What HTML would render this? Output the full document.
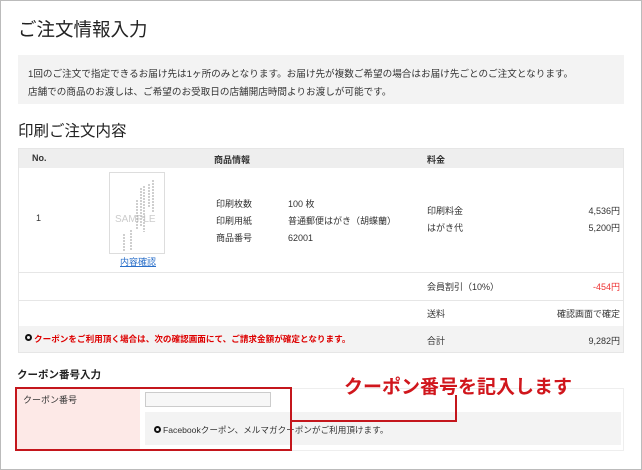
<!DOCTYPE html>
<html><head><meta charset="utf-8"><style>
*{margin:0;padding:0;box-sizing:border-box}
body{width:642px;height:470px;background:#fff;font-family:"Liberation Sans","Noto Sans CJK JP",sans-serif;color:#333;position:relative;overflow:hidden}
.a{position:absolute;white-space:nowrap}
.s{font-size:9px}
</style></head><body>
<div class="a" style="left:0;top:0;width:642px;height:470px;border:1px solid #bbb"></div>
<div class="a" style="left:18px;top:16px;font-size:18.5px;color:#222">ご注文情報入力</div>
<div class="a" style="left:18px;top:55px;width:606px;height:49px;background:#f3f3f3"></div>
<div class="a" style="left:28px;top:66px;font-size:9.6px;line-height:18px;color:#333">1回のご注文で指定できるお届け先は1ヶ所のみとなります。お届け先が複数ご希望の場合はお届け先ごとのご注文となります。<br>店舗での商品のお渡しは、ご希望のお受取日の店舗開店時間よりお渡しが可能です。</div>
<div class="a" style="left:18px;top:119px;font-size:15.5px;color:#222">印刷ご注文内容</div>

<div class="a" style="left:18px;top:148px;width:606px;height:205px;border:1px solid #e6e6e6"></div>
<div class="a" style="left:19px;top:149px;width:604px;height:19px;background:#eee"></div>
<div class="a s" style="left:32px;top:153px;font-weight:bold">No.</div>
<div class="a s" style="left:214px;top:153px;font-weight:bold">商品情報</div>
<div class="a s" style="left:427px;top:153px;font-weight:bold">料金</div>

<div class="a s" style="left:36px;top:263px;top:263px"></div>
<div class="a s" style="left:37px;top:263px;top:263px"></div>
<div class="a s" style="left:37px;top:263px"></div>
<div class="a s" style="left:36px;top:263px"></div>
<div class="a s" style="left:37px;top:262px;top:262px"></div>
<div class="a s" style="left:36px;top:262px"></div>
<div class="a s" style="left:36px;top:213px">1</div>

<div class="a" style="left:109px;top:172px;width:56px;height:82px;border:1px solid #ddd;background:#fff"></div>
<svg class="a" style="left:109px;top:172px" width="56" height="82"><g stroke="#888" stroke-width="0.8" stroke-dasharray="2 1">
<line x1="44" y1="8" x2="44" y2="40"/><line x1="40" y1="12" x2="40" y2="36"/><line x1="35" y1="14" x2="35" y2="60"/><line x1="32" y1="16" x2="32" y2="55"/><line x1="28" y1="28" x2="28" y2="58"/><line x1="22" y1="58" x2="22" y2="78"/><line x1="15" y1="62" x2="15" y2="80"/></g>
<text x="6" y="50" font-size="10" fill="#ccc" font-family="Liberation Sans">SAMPLE</text></svg>
<div class="a s" style="left:120px;top:255px;color:#2a6fc9;text-decoration:underline">内容確認</div>

<div class="a s" style="left:216px;top:196px;line-height:17px">印刷枚数<br>印刷用紙<br>商品番号</div>
<div class="a s" style="left:288px;top:196px;line-height:17px">100 枚<br>普通郵便はがき（胡蝶蘭）<br>62001</div>
<div class="a s" style="left:427px;top:203px;line-height:17px">印刷料金<br>はがき代</div>
<div class="a s" style="left:560px;top:203px;width:60px;text-align:right;line-height:17px">4,536円<br>5,200円</div>

<div class="a" style="left:19px;top:272px;width:604px;height:1px;background:#e6e6e6"></div>
<div class="a s" style="left:427px;top:280px">会員割引（10%）</div>
<div class="a s" style="left:560px;top:280px;width:60px;text-align:right;color:#e33">-454円</div>
<div class="a" style="left:19px;top:300px;width:604px;height:1px;background:#e6e6e6"></div>
<div class="a s" style="left:427px;top:307px">送料</div>
<div class="a s" style="left:520px;top:307px;width:100px;text-align:right">確認画面で確定</div>
<div class="a" style="left:19px;top:326px;width:604px;height:26px;background:#f3f3f3"></div>
<div class="a" style="left:25px;top:334px;width:7px;height:7px;border-radius:50%;border:2px solid #111"></div>
<div class="a s" style="left:34px;top:333px;color:#d00;font-weight:bold;font-size:8.6px">クーポンをご利用頂く場合は、次の確認画面にて、ご請求金額が確定となります。</div>
<div class="a s" style="left:427px;top:334px">合計</div>
<div class="a s" style="left:560px;top:334px;width:60px;text-align:right">9,282円</div>

<div class="a" style="left:17px;top:367px;font-size:10.5px;font-weight:bold;color:#222">クーポン番号入力</div>
<div class="a" style="left:17px;top:388px;width:607px;height:63px;border:1px solid #eee"></div>
<div class="a" style="left:17px;top:389px;width:123px;height:60px;background:#fde9e7"></div>
<div class="a s" style="left:23px;top:393px">クーポン番号</div>
<div class="a" style="left:145px;top:392px;width:126px;height:15px;border:1px solid #ccc;background:#f7f7f7"></div>
<div class="a" style="left:145px;top:412px;width:476px;height:33px;background:#f3f3f3"></div>
<div class="a" style="left:154px;top:426px;width:7px;height:7px;border-radius:50%;border:2px solid #111"></div>
<div class="a s" style="left:163px;top:424px;font-size:8.6px">Facebookクーポン、メルマガクーポンがご利用頂けます。</div>
<div class="a" style="left:15px;top:387px;width:277px;height:64px;border:2px solid #c4161c"></div>
<div class="a" style="left:292px;top:420px;width:165px;height:2px;background:#c4161c"></div>
<div class="a" style="left:455px;top:395px;width:2px;height:27px;background:#c4161c"></div>
<div class="a" style="left:344px;top:372px;font-size:19px;font-weight:bold;color:#d0161c">クーポン番号を記入します</div>
</body></html>
